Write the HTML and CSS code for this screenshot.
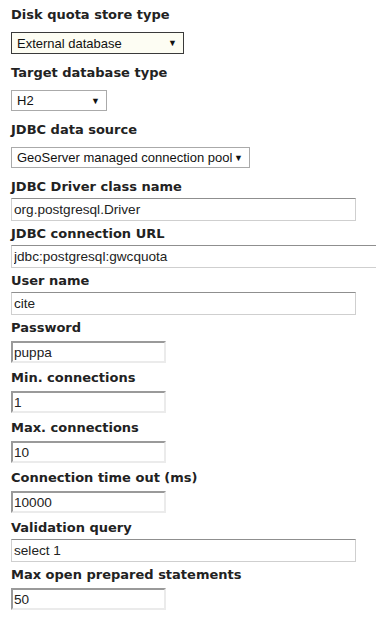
FILE: index.html
```html
<!DOCTYPE html>
<html>
<head lang="en">
    <meta charset="UTF-8">
    <title>Disk quota</title>
    <link rel="stylesheet" href="styles.css">
</head>
<body>
<div class="quota">
    <div class="field field-select">
        <label>Disk quota store type</label>
        <div class="choice choice-focus w-store">
            <span>External database</span><i>&#9660;</i>
        </div>
    </div>
    <div class="field field-select">
        <label>Target database type</label>
        <div class="choice w-type">
            <span>H2</span><i>&#9660;</i>
        </div>
    </div>
    <div class="field field-select">
        <label>JDBC data source</label>
        <div class="choice w-source">
            <span>GeoServer managed connection pool</span><i>&#9660;</i>
        </div>
    </div>
    <div class="field field-wide">
        <label>JDBC Driver class name</label>
        <input class="wide" type="text" value="org.postgresql.Driver">
    </div>
    <div class="field field-wide">
        <label>JDBC connection URL</label>
        <input class="wide url" type="text" value="jdbc:postgresql:gwcquota">
    </div>
    <div class="field field-wide">
        <label>User name</label>
        <input class="wide" type="text" value="cite">
    </div>
    <div class="field field-short">
        <label>Password</label>
        <input class="short" type="text" value="puppa">
    </div>
    <div class="field field-short">
        <label>Min. connections</label>
        <input class="short" type="text" value="1">
    </div>
    <div class="field field-short">
        <label>Max. connections</label>
        <input class="short" type="text" value="10">
    </div>
    <div class="field field-short">
        <label>Connection time out (ms)</label>
        <input class="short" type="text" value="10000">
    </div>
    <div class="field field-wide">
        <label>Validation query</label>
        <input class="wide" type="text" value="select 1">
    </div>
    <div class="field field-short">
        <label>Max open prepared statements</label>
        <input class="short" type="text" value="50">
    </div>
</div>
</body>
</html>
```

FILE: styles.css
```css
body, div, label, input {
    margin: 0;
    padding: 0;
}
body {
    background: #fff;
    overflow: hidden;
}
.quota {
    padding: 7px 0 0 11px;
}
.field label {
    display: block;
    font: bold 13px/15px "DejaVu Sans", sans-serif;
    color: #222;
}
.field-select {
    padding-bottom: 11px;
}
.field-select label {
    margin-bottom: 10px;
}
.field-wide {
    padding-bottom: 5px;
}
.field-wide label {
    margin-bottom: 4px;
}
.field-short {
    padding-bottom: 7px;
}
.field-short label {
    margin-bottom: 6px;
}
.choice {
    display: flex;
    align-items: center;
    justify-content: space-between;
    box-sizing: border-box;
    height: 21px;
    padding: 0 6px 0 5px;
    border: 1px solid #aaa;
    background: #fff;
    font: 13px "Liberation Sans", Arial, sans-serif;
    color: #111;
}
.choice i {
    font-style: normal;
    font-size: 9px;
}
.choice-focus {
    height: 22px;
    border-color: #3a3a3a;
    background: #fdfdf3;
}
.w-store {
    width: 173px;
}
.w-type {
    width: 96px;
}
.w-source {
    width: 239px;
}
input {
    display: block;
    box-sizing: border-box;
    font: 13.6px "Liberation Sans", Arial, sans-serif;
    color: #222;
    background: #fff;
    outline: none;
}
input.wide {
    width: 345px;
    height: 23px;
    padding: 0 2px;
    border: 1px solid #cfcfcf;
    border-top-color: #8f8f8f;
}
input.url {
    width: 420px;
}
input.short {
    width: 155px;
    height: 22px;
    padding: 0 1px;
    border: 2px solid #ebebeb;
    border-top-color: #9a9a9a;
    border-left-color: #9a9a9a;
}
```
